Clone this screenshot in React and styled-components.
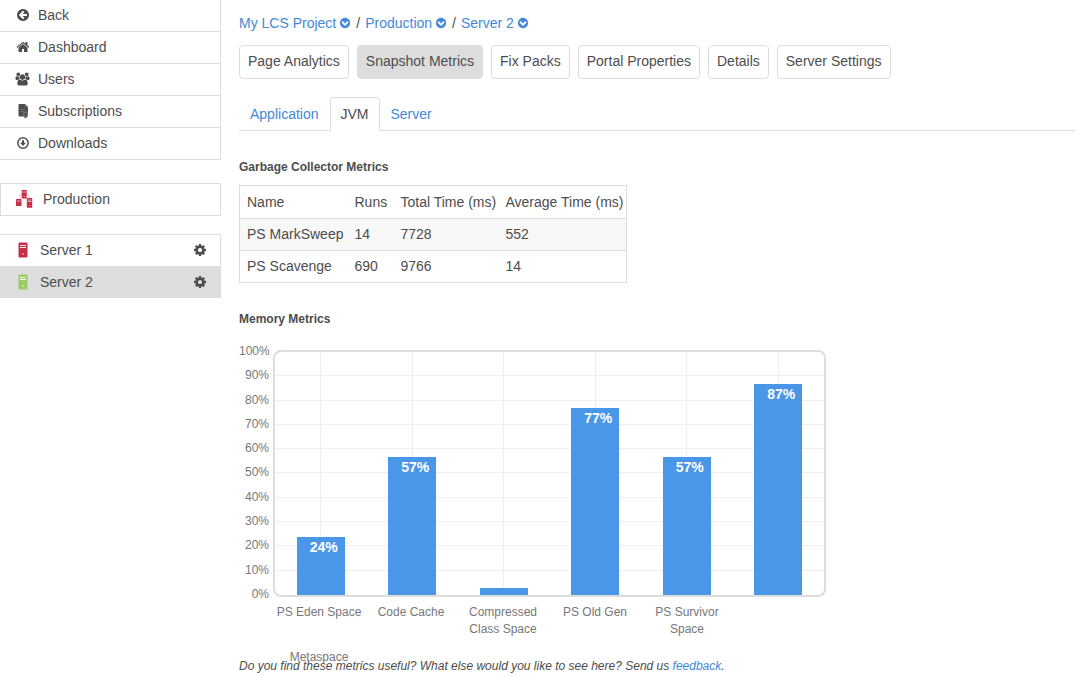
import React from "react";
import styled, { createGlobalStyle, css } from "styled-components";

const color = {
  text: "#4d4d4d",
  muted: "#777",
  line: "#ddd",
  grid: "#f0eeee",
  blue: "#4a96e9",
  link: "#4489d9",
  red: "#c62d47",
  green: "#99cc66",
};

const GlobalStyle = createGlobalStyle`
  *, *::before, *::after { box-sizing: border-box; }
  body {
    margin: 0;
    background: #fff;
    color: ${color.text};
    font: 14px/20px "Liberation Sans", Arial, sans-serif;
  }
`;

const Page = styled.div`
  display: flex;
  align-items: flex-start;
`;

const Sidebar = styled.nav`
  flex: 0 0 221px;
  display: flex;
  flex-direction: column;
`;

const Menu = styled.ul`
  list-style: none;
  margin: 0;
  padding: 0;
  border-right: 1px solid ${color.line};
`;

const MenuItem = styled.li`
  border-bottom: 1px solid ${color.line};
`;

const MenuLink = styled.a`
  display: flex;
  align-items: center;
  gap: 8px;
  height: 31px;
  padding: 0 0 2px 15px;
  color: inherit;
  text-decoration: none;
`;

const IconSlot = styled.span`
  display: flex;
  justify-content: center;
  flex: 0 0 15px;
  min-width: 0;
`;

const Environment = styled.a`
  display: flex;
  align-items: center;
  gap: 10px;
  height: 33px;
  margin: 23px 0 18px;
  padding: 0 0 2px 15px;
  border: 1px solid ${color.line};
  color: inherit;
  text-decoration: none;
`;

const ServerList = styled.ul`
  list-style: none;
  margin: 0;
  padding: 0;
  border: solid ${color.line};
  border-width: 1px 1px 0 0;
`;

const ServerItem = styled.li`
  display: flex;
  align-items: center;
  justify-content: space-between;
  height: ${(p) => (p.$active ? 32 : 31)}px;
  padding: 0 13px ${(p) => (p.$active ? 0 : 1)}px 16px;
  background: ${(p) => (p.$active ? color.line : "transparent")};
`;

const ServerLink = styled.a`
  display: flex;
  align-items: center;
  gap: 10px;
  color: inherit;
  text-decoration: none;
`;

const GearButton = styled.button`
  display: flex;
  padding: 0;
  border: 0;
  background: none;
  color: inherit;
`;

const Main = styled.main`
  flex: 1;
  min-width: 0;
  padding: 13px 5px 0 18px;
`;

const Breadcrumb = styled.nav`
  display: flex;
  align-items: center;
  gap: 5px;
`;

const Crumb = styled.a`
  display: flex;
  align-items: center;
  gap: 3px;
  color: ${color.link};
  text-decoration: none;
`;

const ButtonRow = styled.div`
  display: flex;
  flex-wrap: wrap;
  gap: 8px;
  margin-top: 12px;
`;

const NavButton = styled.button`
  height: 34px;
  padding: 0 8px 2px;
  border: 1px solid ${color.line};
  border-radius: 4px;
  background: ${(p) => (p.$active ? color.line : "#fff")};
  color: inherit;
  font: inherit;
`;

const Tabs = styled.nav`
  display: flex;
  margin-top: 18px;
  border-bottom: 1px solid ${color.line};
`;

const Tab = styled.a`
  height: 34px;
  margin-bottom: -1px;
  padding: 6px 10px;
  border: 1px solid transparent;
  border-radius: 4px 4px 0 0;
  color: ${color.link};
  text-decoration: none;
  ${(p) =>
    p.$active &&
    css`
      border-color: ${color.line} ${color.line} #fff;
      background: #fff;
      color: ${color.text};
    `}
`;

const Heading = styled.h2`
  margin: 26px 0 8px;
  font-size: 12px;
  line-height: 20px;
`;

const Table = styled.table`
  border: 1px solid ${color.line};
  border-collapse: collapse;
`;

const Row = styled.tr`
  border-bottom: 1px solid ${color.line};
  background: ${(p) => (p.$shaded ? "#f8f8f8" : "#fff")};
`;

const cell = css`
  padding: 5px 2px 6px 7px;
  text-align: left;
  font-weight: normal;
`;

const HeadCell = styled.th`
  ${cell}
  width: ${(p) => p.$width}px;
  padding-top: 6px;
`;

const Cell = styled.td`
  ${cell}
`;

const Chart = styled.figure`
  display: grid;
  grid-template-columns: 30px minmax(0, 553px);
  column-gap: 4px;
  margin: 21px 0 0;
  color: ${color.muted};
  font-size: 12px;
  line-height: 17px;
`;

const Scale = styled.div`
  display: flex;
  flex-direction: column;
  justify-content: space-between;
  height: 260px;
  margin: -7px 0 -6px;
  text-align: right;
`;

const Plot = styled.div`
  position: relative;
  height: 247px;
  border: 2px solid ${color.line};
  border-radius: 8px;
`;

const GridLines = styled.div`
  position: absolute;
  inset: 0;
  display: grid;
  grid-template-rows: repeat(10, 1fr);
`;

const GridLine = styled.div`
  &:not(:last-child) {
    border-bottom: 1px solid ${color.grid};
  }
`;

const Columns = styled.div`
  position: absolute;
  inset: 0;
  display: grid;
  grid-template-columns: repeat(6, 1fr);
`;

const Column = styled.div`
  display: flex;
  align-items: flex-end;
  justify-content: center;
  background: linear-gradient(${color.grid}, ${color.grid}) center / 1px 100% no-repeat;
`;

const Bar = styled.div`
  width: 48px;
  padding-right: 7px;
  background: ${color.blue};
  color: #fff;
  font-size: 14px;
  font-weight: bold;
  line-height: 20px;
  text-align: right;
`;

const Names = styled.div`
  grid-column: 2;
  display: flex;
  flex-wrap: wrap;
  row-gap: 11px;
  width: 551px;
  height: 52px;
  margin-top: 7px;
`;

const Name = styled.span`
  flex: 0 0 92px;
  padding: 0 2px;
  text-align: center;
`;

const Feedback = styled.p`
  margin: 0;
  font-size: 12px;
  font-style: italic;
  line-height: 20px;
`;

const Link = styled.a`
  color: ${color.link};
  text-decoration: none;
`;

const glyphs = {
  back: "M1408 960v-128q0-26-19-45t-45-19h-502l189-189q19-19 19-45t-19-45l-91-91q-18-18-45-18t-45 18l-362 362-91 91q-18 18-18 45t18 45l91 91 362 362q18 18 45 18t45-18l91-91q18-18 18-45t-18-45l-189-189h502q26 0 45-19t19-45zm256-64q0 209-103 385.5t-279.5 279.5-385.5 103-385.5-103-279.5-279.5-103-385.5 103-385.5 279.5-279.5 385.5-103 385.5 103 279.5 279.5 103 385.5z",
  home: "M1472 992v480q0 26-19 45t-45 19h-384v-384h-256v384h-384q-26 0-45-19t-19-45v-480q0-1 .5-3t.5-3l575-474 575 474q1 2 1 6zm223-69l-62 74q-8 9-21 11h-3q-13 0-21-7l-692-577-692 577q-12 8-24 7-13-2-21-11l-62-74q-8-10-7-23.5t11-21.5l719-599q32-26 76-26t76 26l244 204v-195q0-14 9-23t23-9h192q14 0 23 9t9 23v408l219 182q10 8 11 21.5t-7 23.5z",
  users: "M657 896q-162 5-265 128h-134q-82 0-138-40.5t-56-118.5q0-353 124-353 6 0 43.5 21t97.5 42.5 119 21.5q67 0 133-23-5 37-5 66 0 139 81 256zm1071 637q0 120-73 189.5t-194 69.5h-874q-121 0-194-69.5t-73-189.5q0-53 3.5-103.5t14-109 26.5-108.5 43-97.5 62-81 85.5-53.5 111.5-20q10 0 43 21.5t73 48 107 48 135 21.5 135-21.5 107-48 73-48 43-21.5q61 0 111.5 20t85.5 53.5 62 81 43 97.5 26.5 108.5 14 109 3.5 103.5zm-1024-1277q0 106-75 181t-181 75-181-75-75-181 75-181 181-75 181 75 75 181zm704 384q0 159-112.5 271.5t-271.5 112.5-271.5-112.5-112.5-271.5 112.5-271.5 271.5-112.5 271.5 112.5 112.5 271.5zm576 225q0 78-56 118.5t-138 40.5h-134q-103-123-265-128 81-117 81-256 0-29-5-66 66 23 133 23 59 0 119-21.5t97.5-42.5 43.5-21q124 0 124 353zm-128-609q0 106-75 181t-181 75-181-75-75-181 75-181 181-75 181 75 75 181z",
  down: "M941 1299l454-454q19-19 19-45t-19-45l-102-102q-19-19-45-19t-45 19l-307 307-307-307q-19-19-45-19t-45 19l-102 102q-19 19-19 45t19 45l454 454q19 19 45 19t45-19zm723-403q0 209-103 385.5t-279.5 279.5-385.5 103-385.5-103-279.5-279.5-103-385.5 103-385.5 279.5-279.5 385.5-103 385.5 103 279.5 279.5 103 385.5z",
  cog: "M1152 896q0-106-75-181t-181-75-181 75-75 181 75 181 181 75 181-75 75-181zm512-109v222q0 12-8 23t-20 13l-185 28q-19 54-39 91 35 50 107 138 10 12 10 25t-9 23q-27 37-99 108t-94 71q-12 0-26-9l-138-108q-44 23-91 38-16 136-29 186-7 28-36 28h-222q-14 0-24.5-8.5t-11.5-21.5l-28-184q-49-16-90-37l-141 107q-10 9-25 9-14 0-25-11-126-114-165-168-7-10-7-23 0-12 8-23 15-21 51-66.5t54-70.5q-27-50-41-99l-183-27q-13-2-21-12.5t-8-23.5v-222q0-12 8-23t19-13l186-28q14-46 39-92-40-57-107-138-10-12-10-24 0-10 9-23 26-36 98.5-107.5t94.5-71.5q13 0 26 10l138 107q44-23 91-38 16-136 29-186 7-28 36-28h222q14 0 24.5 8.5t11.5 21.5l28 184q49 16 90 37l142-107q9-9 24-9 13 0 25 10 129 119 165 170 7 8 7 22 0 12-8 23-15 21-51 66.5t-54 70.5q26 50 41 98l183 28q13 2 21 12.5t8 23.5z",
};

const Glyph = ({ name, width = 14, box = "0 0 1792 1792" }) => (
  <svg width={width} height="14" viewBox={box} fill="currentColor" aria-hidden="true">
    <path fillRule="evenodd" d={glyphs[name]} />
  </svg>
);

const DocumentIcon = () => (
  <svg width="14" height="16" viewBox="0 0 14 16" aria-hidden="true">
    <path d="M3.500 1H9l3 3v9.500H3.500a1 1 0 0 1-1-1V2a1 1 0 0 1 1-1z" fill="currentColor" />
    <path d="M9 1v3h3M4.500 6.500H9M4.500 8.500H8" stroke="#888" strokeWidth=".6" fill="none" />
    <circle cx="9.500" cy="11" r="2" fill="currentColor" stroke="#aaa" strokeWidth=".5" />
    <path d="M8.500 12.500h2V15.500l-1-.8-1 .8z" fill="currentColor" />
  </svg>
);

const DownloadIcon = () => (
  <svg width="14" height="14" viewBox="0 0 14 14" aria-hidden="true">
    <circle cx="7" cy="7" r="5.200" fill="none" stroke="currentColor" strokeWidth="1.500" />
    <path d="M6 4.200h2v2.600h2L7 9.900 4 6.800h2z" fill="currentColor" />
  </svg>
);

const ServerIcon = ({ fill }) => (
  <svg width="14" height="16" viewBox="0 0 14 16" aria-hidden="true">
    <rect x="2.500" y=".5" width="9" height="15" rx="1" fill={fill} />
    <path d="M4 3.500h6M4 5.500h6" stroke="#fff" strokeWidth=".9" />
    <circle cx="7" cy="12" r=".7" fill="#fff" />
  </svg>
);

const ClusterIcon = () => (
  <svg width="17" height="18" viewBox="0 0 17 18" aria-hidden="true">
    <path d="M4 9V4.500h2M11 4.500h2V9" stroke="#e3a0aa" fill="none" strokeWidth=".6" />
    <g fill={color.red}>
      <rect x="5.700" y="0" width="5" height="8.500" rx=".6" />
      <rect x="0" y="9" width="5.500" height="7" rx=".6" />
      <rect x="10.800" y="8" width="5.400" height="9.700" rx=".6" />
    </g>
    <path d="M6.500 2h3.400M.9 11h3.700M11.700 10h3.600M11.700 11.500h3.600" stroke="#fff" strokeWidth=".6" />
    <path d="M7.700 6.500h1M13 15.500h1" stroke="#fff" strokeWidth=".7" />
  </svg>
);

const menu = [
  ["Back", <Glyph name="back" />],
  ["Dashboard", <Glyph name="home" />],
  ["Users", <Glyph name="users" width={15} box="0 0 2048 1792" />],
  ["Subscriptions", <DocumentIcon />],
  ["Downloads", <DownloadIcon />],
];

const servers = [
  { name: "Server 1", fill: color.red },
  { name: "Server 2", fill: color.green, active: true },
];

const crumbs = ["My LCS Project", "Production", "Server 2"];
const sections = ["Page Analytics", "Snapshot Metrics", "Fix Packs", "Portal Properties", "Details", "Server Settings"];
const tabs = ["Application", "JVM", "Server"];

const collectors = [
  ["PS MarkSweep", 14, 7728, 552],
  ["PS Scavenge", 690, 9766, 14],
];

const memory = [
  { name: "PS Eden Space", value: 24 },
  { name: "Code Cache", value: 57 },
  { name: "Compressed Class Space", value: 3 },
  { name: "PS Old Gen", value: 77 },
  { name: "PS Survivor Space", value: 57 },
  { name: "Metaspace", value: 87 },
];

const ticks = [100, 90, 80, 70, 60, 50, 40, 30, 20, 10, 0];

export default function App() {
  return (
    <Page>
      <GlobalStyle />
      <Sidebar>
        <Menu>
          {menu.map(([label, icon]) => (
            <MenuItem key={label}>
              <MenuLink href="#">
                <IconSlot>{icon}</IconSlot>
                {label}
              </MenuLink>
            </MenuItem>
          ))}
        </Menu>
        <Environment href="#">
          <ClusterIcon />
          Production
        </Environment>
        <ServerList>
          {servers.map((s) => (
            <ServerItem key={s.name} $active={s.active}>
              <ServerLink href="#">
                <ServerIcon fill={s.fill} />
                {s.name}
              </ServerLink>
              <GearButton aria-label={`${s.name} options`}>
                <Glyph name="cog" />
              </GearButton>
            </ServerItem>
          ))}
        </ServerList>
      </Sidebar>
      <Main>
        <Breadcrumb>
          {crumbs.map((c, i) => (
            <React.Fragment key={c}>
              {i > 0 && <span>/</span>}
              <Crumb href="#">
                {c}
                <Glyph name="down" width={12} />
              </Crumb>
            </React.Fragment>
          ))}
        </Breadcrumb>
        <ButtonRow>
          {sections.map((s) => (
            <NavButton key={s} $active={s === "Snapshot Metrics"}>
              {s}
            </NavButton>
          ))}
        </ButtonRow>
        <Tabs>
          {tabs.map((t) => (
            <Tab key={t} href="#" $active={t === "JVM"}>
              {t}
            </Tab>
          ))}
        </Tabs>
        <Heading>Garbage Collector Metrics</Heading>
        <Table>
          <thead>
            <Row>
              <HeadCell $width={108}>Name</HeadCell>
              <HeadCell $width={46}>Runs</HeadCell>
              <HeadCell $width={105}>Total Time (ms)</HeadCell>
              <HeadCell $width={128}>Average Time (ms)</HeadCell>
            </Row>
          </thead>
          <tbody>
            {collectors.map((row, i) => (
              <Row key={row[0]} $shaded={i === 0}>
                {row.map((value, j) => (
                  <Cell key={j}>{value}</Cell>
                ))}
              </Row>
            ))}
          </tbody>
        </Table>
        <Heading>Memory Metrics</Heading>
        <Chart>
          <Scale>
            {ticks.map((t) => (
              <span key={t}>{t}%</span>
            ))}
          </Scale>
          <Plot>
            <GridLines>
              {ticks.slice(1).map((t) => (
                <GridLine key={t} />
              ))}
            </GridLines>
            <Columns>
              {memory.map((m) => (
                <Column key={m.name}>
                  <Bar style={{ height: `${m.value}%` }}>{m.value > 10 && `${m.value}%`}</Bar>
                </Column>
              ))}
            </Columns>
          </Plot>
          <Names>
            {memory.map((m) => (
              <Name key={m.name}>{m.name}</Name>
            ))}
          </Names>
        </Chart>
        <Feedback>
          Do you find these metrics useful? What else would you like to see here? Send us <Link href="#">feedback</Link>.
        </Feedback>
      </Main>
    </Page>
  );
}
